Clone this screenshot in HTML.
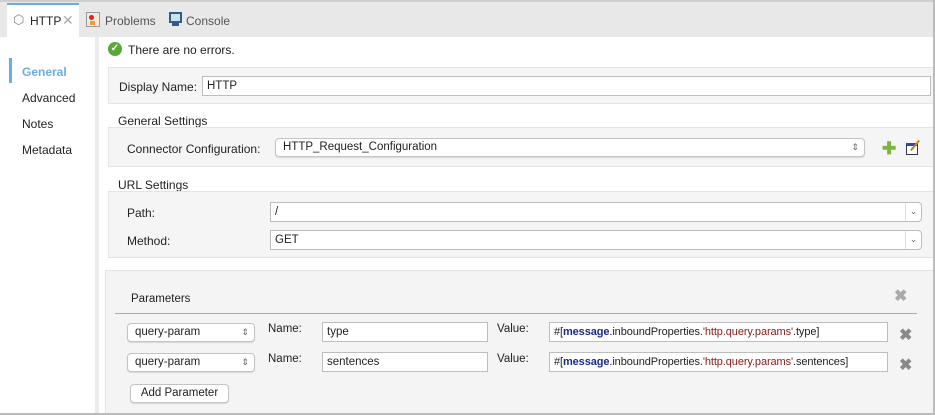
<!DOCTYPE html>
<html><head><style>
*{box-sizing:border-box;margin:0;padding:0}
body{width:935px;height:415px;overflow:hidden;background:#fff;font-family:"Liberation Sans",sans-serif;font-size:12px;color:#222;position:relative}
.a{position:absolute}
.inp{position:absolute;background:#fff;border:1px solid #bdbdbd;height:20px;padding:0 4px;line-height:18px;font-size:11.5px;white-space:nowrap;overflow:hidden}
.sel{position:absolute;background:#fff;border:1px solid #c4c4c4;border-radius:4px;height:19px;padding:0 7px;line-height:17px;font-size:11.5px;box-shadow:0 1px 1px rgba(0,0,0,.12)}
.panel{position:absolute;background:#f5f5f5;border:1px solid #e4e4e4}
.dd{position:absolute;right:0;top:0;width:16px;height:100%;border-left:1px solid #ddd;text-align:center;font-size:9px;color:#666;line-height:17px}
.x{position:absolute;font-size:16px;font-weight:bold;color:#8a8a8a}
.v{font-size:11px;letter-spacing:-0.1px}
</style></head><body>
<div class="a" style="left:0;top:0;width:935px;height:37px;background:#e8e8e8;border-top:2px solid #cfcfcf"></div>
<div class="a" style="left:7px;top:3px;width:72px;height:34px;background:#fff;border-top:2px solid #6aaee0"></div>
<div class="a" style="left:13px;top:12px;color:#888;font-size:13px">⬡</div>
<div class="a" style="left:30px;top:14px;font-size:12px">HTTP</div>
<div class="a" style="left:62px;top:12px;color:#aaa;font-size:14px">✕</div>
<div class="a" style="left:86px;top:12px;width:14px;height:15px;border:1px solid #99a;background:#f3e9d8"><div class="a" style="left:2px;top:2px;width:5px;height:5px;border-radius:3px;background:#d22"></div><div class="a" style="left:3px;top:8px;width:5px;height:4px;background:#e9a030"></div></div>
<div class="a" style="left:105px;top:14px;color:#555">Problems</div>
<div class="a" style="left:169px;top:12px;width:13px;height:11px;border:2px solid #2d5d8a;background:#cfe0ef"></div>
<div class="a" style="left:172px;top:23px;width:7px;height:3px;background:#2d5d8a"></div>
<div class="a" style="left:186px;top:14px;color:#555">Console</div>
<div class="a" style="left:95px;top:37px;width:4px;height:378px;background:#ececec"></div>
<div class="a" style="left:9px;top:58px;width:3px;height:25px;background:#6aaee0"></div>
<div class="a" style="left:22px;top:65px;color:#6aaee0;font-weight:bold;font-size:12px">General</div>
<div class="a" style="left:22px;top:91px">Advanced</div>
<div class="a" style="left:22px;top:117px">Notes</div>
<div class="a" style="left:22px;top:143px">Metadata</div>
<div class="a" style="left:108px;top:42px;width:14px;height:14px;border-radius:7px;background:#58a83a;color:#fff;font-size:10px;text-align:center;line-height:14px;font-weight:bold">✓</div>
<div class="a" style="left:128px;top:43px">There are no errors.</div>
<div class="panel" style="left:108px;top:67px;width:827px;height:37px"></div>
<div class="a" style="left:119px;top:80px">Display Name:</div>
<div class="inp" style="left:202px;top:76px;width:729px">HTTP</div>
<div class="a" style="left:118px;top:114px">General Settings</div>
<div class="panel" style="left:108px;top:127px;width:827px;height:40px"></div>
<div class="a" style="left:127px;top:142px">Connector Configuration:</div>
<div class="sel" style="left:275px;top:138px;width:590px">HTTP_Request_Configuration<span class="a" style="right:5px;top:0;font-size:9px;color:#666">⇕</span></div>
<div class="a" style="left:882px;top:140px;color:#7cb342;font-size:17px;font-weight:bold;line-height:17px">✚</div>
<div class="a" style="left:906px;top:143px;width:12px;height:12px;border:1px solid #335;border-top:3px solid #2a4f9a;background:#fff"></div>
<div class="a" style="left:914px;top:139px;width:2px;height:13px;background:#c77b30;transform:rotate(40deg)"></div>
<div class="a" style="left:118px;top:178px">URL Settings</div>
<div class="panel" style="left:108px;top:191px;width:827px;height:67px"></div>
<div class="a" style="left:127px;top:206px">Path:</div>
<div class="inp" style="left:270px;top:202px;width:652px;border-radius:0 4px 4px 0">/<div class="dd">⌄</div></div>
<div class="a" style="left:127px;top:234px">Method:</div>
<div class="inp" style="left:270px;top:230px;width:652px;border-radius:0 4px 4px 0">GET<div class="dd">⌄</div></div>
<div class="panel" style="left:105px;top:270px;width:830px;height:145px;background:#f4f4f4"></div>
<div class="a" style="left:131px;top:293px;font-size:11.5px">Parameters</div>
<div class="a" style="left:115px;top:313px;width:802px;height:1px;background:#aaa"></div>
<div class="x" style="left:894px;top:286px;color:#aaa">✖</div>
<div class="sel" style="left:127px;top:323px;width:128px">query-param<span class="a" style="right:5px;top:0;font-size:9px;color:#666">⇕</span></div>
<div class="a" style="left:268px;top:323px;font-size:11.5px">Name:</div>
<div class="inp" style="left:322px;top:322px;width:166px">type</div>
<div class="a" style="left:497px;top:323px;font-size:11.5px">Value:</div>
<div class="inp v" style="left:549px;top:322px;width:339px">#[<b style="color:#1a2a8a">message</b>.inboundProperties.<span style="color:#8a1a1a">'http.query.params'</span>.type]</div>
<div class="x" style="left:899px;top:325px">✖</div>
<div class="sel" style="left:127px;top:353px;width:128px">query-param<span class="a" style="right:5px;top:0;font-size:9px;color:#666">⇕</span></div>
<div class="a" style="left:268px;top:353px;font-size:11.5px">Name:</div>
<div class="inp" style="left:322px;top:352px;width:166px">sentences</div>
<div class="a" style="left:497px;top:353px;font-size:11.5px">Value:</div>
<div class="inp v" style="left:549px;top:352px;width:339px">#[<b style="color:#1a2a8a">message</b>.inboundProperties.<span style="color:#8a1a1a">'http.query.params'</span>.sentences]</div>
<div class="x" style="left:899px;top:355px">✖</div>
<div class="sel" style="left:130px;top:384px;width:99px;text-align:center;padding:0">Add Parameter</div>
<div class="a" style="left:933px;top:0;width:2px;height:415px;background:#bbb"></div>
<div class="a" style="left:0;top:413px;width:935px;height:2px;background:#bbb"></div>
</body></html>
